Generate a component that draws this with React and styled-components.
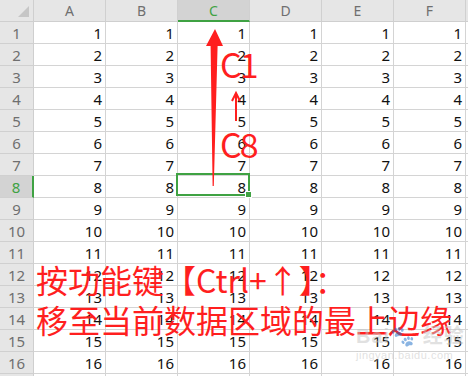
import styled, { createGlobalStyle } from 'styled-components';

const GlobalStyle = createGlobalStyle`
  html, body {
    margin: 0;
    padding: 0;
    background: #fff;
    overflow: hidden;
  }
`;

const COLS = ['A', 'B', 'C', 'D', 'E', 'F'];
const ROWS = Array.from({ length: 17 }, (_, i) => i + 1);
const ACTIVE_COL = 'C';
const ACTIVE_ROW = 8;
const GREEN = '#3fa243';
const RED = '#ff1f1f';

const Stage = styled.div`
  position: relative;
  width: 468px;
  height: 376px;
  overflow: hidden;
  font-family: "Noto Sans", "Liberation Sans", sans-serif;
`;

const Sheet = styled.div`
  display: grid;
  grid-template-columns: 34px repeat(6, 72px) 1fr;
  grid-auto-rows: 22px;
`;

const Corner = styled.div`
  position: relative;
  background: #e6e6e6;
  border-right: 1px solid #cfcfcf;
  border-bottom: 1px solid #cfcfcf;

  &::after {
    content: '';
    position: absolute;
    right: 4px;
    bottom: 4px;
    border-left: 11px solid transparent;
    border-bottom: 11px solid #c6c6c6;
  }
`;

const ColHead = styled.div`
  display: flex;
  align-items: center;
  justify-content: center;
  background: ${p => (p.$active ? '#d3d3d3' : '#e6e6e6')};
  color: ${p => (p.$active ? GREEN : '#6f6f6f')};
  border-right: 1px solid #d0d0d0;
  border-bottom: ${p => (p.$active ? `2px solid ${GREEN}` : '1px solid #cfcfcf')};
  font-size: 14px;
  box-sizing: border-box;
`;

const RowHead = styled.div`
  display: flex;
  align-items: center;
  justify-content: center;
  background: ${p => (p.$active ? '#d3d3d3' : '#e6e6e6')};
  color: ${p => (p.$active ? GREEN : '#6f6f6f')};
  border-right: ${p => (p.$active ? `2px solid ${GREEN}` : '1px solid #cfcfcf')};
  border-bottom: 1px solid #d0d0d0;
  font-size: 15px;
  box-sizing: border-box;
`;

const Cell = styled.div`
  display: flex;
  align-items: center;
  justify-content: flex-end;
  padding-right: 3px;
  border-right: 1px solid #d4d4d4;
  border-bottom: 1px solid #d4d4d4;
  color: #111;
  font-size: 15px;
  box-sizing: border-box;
`;

const Selection = styled.div`
  position: absolute;
  left: 176px;
  top: 173px;
  width: 74px;
  height: 23px;
  border: 2px solid ${GREEN};
  box-sizing: border-box;
  pointer-events: none;

  &::after {
    content: '';
    position: absolute;
    right: -4px;
    bottom: -4px;
    width: 5px;
    height: 5px;
    background: ${GREEN};
    border: 1px solid #fff;
  }
`;

const Overlay = styled.svg`
  position: absolute;
  left: 0;
  top: 0;
`;

const Label = styled.div`
  position: absolute;
  left: ${p => p.$x}px;
  top: ${p => p.$y}px;
  color: ${RED};
  font-family: "Noto Sans CJK SC", "Noto Sans", sans-serif;
  font-size: 34px;
  line-height: 1;
  letter-spacing: -2px;
`;

const Caption = styled.div`
  position: absolute;
  left: 36px;
  top: 259px;
  color: ${RED};
  font-family: "Noto Sans CJK SC", sans-serif;
  font-size: 32px;
  line-height: 40px;
  white-space: nowrap;
`;

const Watermark = styled.div`
  position: absolute;
  left: 356px;
  top: 326px;
  display: flex;
  flex-direction: column;
  color: rgba(195, 195, 195, 0.5);
  font-family: "Liberation Sans", "Noto Sans CJK SC", sans-serif;
  line-height: 1;
`;

const MarkTop = styled.span`
  font-size: 20px;
  font-weight: bold;
  letter-spacing: 1px;
`;

const MarkBottom = styled.span`
  font-size: 11px;
  margin-top: 4px;
  letter-spacing: 0.5px;
`;

export default function App() {
  return (
    <Stage>
      <GlobalStyle />
      <Sheet>
        <Corner />
        {COLS.map(c => (
          <ColHead key={c} $active={c === ACTIVE_COL}>{c}</ColHead>
        ))}
        <ColHead />
        {ROWS.map(r => [
          <RowHead key={`h${r}`} $active={r === ACTIVE_ROW}>{r <= 16 ? r : ''}</RowHead>,
          ...COLS.map(c => <Cell key={`${c}${r}`}>{r <= 16 ? r : ''}</Cell>),
          <Cell key={`x${r}`} />,
        ])}
      </Sheet>

      <Selection />

      <Overlay width="468" height="376">
        <polygon
          points="212.6,186 213.8,186 217.6,46 223,46 215,29 206,46 210.6,46"
          fill={RED}
        />
        <path d="M236 121 L236 94 M232 101 L236 93 L240 101" stroke={RED} strokeWidth="2" fill="none" />
      </Overlay>

      <Label $x={220} $y={47}>C1</Label>
      <Label $x={220} $y={127}>C8</Label>

      <Caption>
        按功能键【Ctrl+↑】：<br />
        移至当前数据区域的最上边缘
      </Caption>

      <Watermark>
        <MarkTop>Bai🐾 经验</MarkTop>
        <MarkBottom>jingyan.baidu.com</MarkBottom>
      </Watermark>
    </Stage>
  );
}
